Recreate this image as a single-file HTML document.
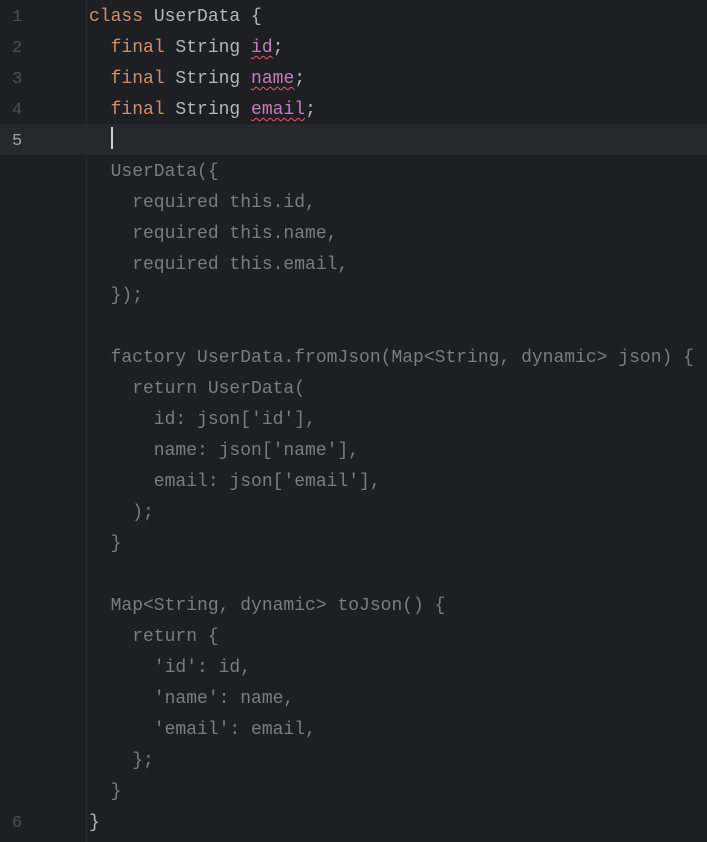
<!DOCTYPE html>
<html><head><meta charset="utf-8"><style>
html,body{margin:0;padding:0;background:#1e1f22;width:707px;height:842px;overflow:hidden}
.ed{position:relative;font-family:"Liberation Mono",monospace;font-size:18px;}
.gl{position:absolute;left:86px;top:0;width:1px;height:842px;background:#26282b}
.row{position:absolute;left:0;width:707px;height:31px;line-height:35px;white-space:pre}
.cur{background:#26282e}
.num{position:absolute;left:12px;color:#4b5059;font-size:17px}
.cur .num{color:#a1a3ab}
.code{position:absolute;left:89px;color:#b4b6bc}
.k{color:#cf8e6d}.f{color:#c77dbb;text-decoration:underline wavy #f75464;text-decoration-thickness:1px;text-underline-offset:3px}
.d{color:#7a7c80}
.caret{display:inline-block;width:2px;height:22px;background:#ced0d6;vertical-align:middle;position:relative;top:-2px}
</style></head><body><div class="ed">
<div class="row" style="top:0"><span class="num">1</span><span class="code"><span class="k">class</span> UserData {</span></div>
<div class="row" style="top:31px"><span class="num">2</span><span class="code">  <span class="k">final</span> String <span class="f">id</span>;</span></div>
<div class="row" style="top:62px"><span class="num">3</span><span class="code">  <span class="k">final</span> String <span class="f">name</span>;</span></div>
<div class="row" style="top:93px"><span class="num">4</span><span class="code">  <span class="k">final</span> String <span class="f">email</span>;</span></div>
<div class="row cur" style="top:124px"><span class="num">5</span><span class="code">  <span class="caret"></span></span></div>
<div class="row" style="top:155px"><span class="code d">  UserData({</span></div>
<div class="row" style="top:186px"><span class="code d">    required this.id,</span></div>
<div class="row" style="top:217px"><span class="code d">    required this.name,</span></div>
<div class="row" style="top:248px"><span class="code d">    required this.email,</span></div>
<div class="row" style="top:279px"><span class="code d">  });</span></div>
<div class="row" style="top:341px"><span class="code d">  factory UserData.fromJson(Map&lt;String, dynamic&gt; json) {</span></div>
<div class="row" style="top:372px"><span class="code d">    return UserData(</span></div>
<div class="row" style="top:403px"><span class="code d">      id: json['id'],</span></div>
<div class="row" style="top:434px"><span class="code d">      name: json['name'],</span></div>
<div class="row" style="top:465px"><span class="code d">      email: json['email'],</span></div>
<div class="row" style="top:496px"><span class="code d">    );</span></div>
<div class="row" style="top:527px"><span class="code d">  }</span></div>
<div class="row" style="top:589px"><span class="code d">  Map&lt;String, dynamic&gt; toJson() {</span></div>
<div class="row" style="top:620px"><span class="code d">    return {</span></div>
<div class="row" style="top:651px"><span class="code d">      'id': id,</span></div>
<div class="row" style="top:682px"><span class="code d">      'name': name,</span></div>
<div class="row" style="top:713px"><span class="code d">      'email': email,</span></div>
<div class="row" style="top:744px"><span class="code d">    };</span></div>
<div class="row" style="top:775px"><span class="code d">  }</span></div>
<div class="row" style="top:806px"><span class="num">6</span><span class="code">}</span></div>
<div class="gl"></div>
</div></body></html>
